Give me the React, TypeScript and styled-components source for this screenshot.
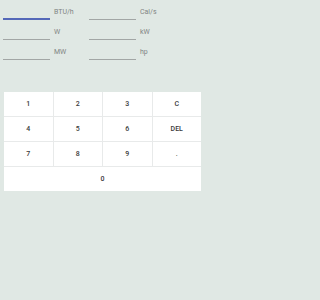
import React from "react";
import styled, { createGlobalStyle } from "styled-components";

const Global = createGlobalStyle`
  html, body { margin: 0; padding: 0; background: #e0e8e4; }
  body { font-family: Roboto, "Liberation Sans", sans-serif; }
`;

const Page = styled.div`
  width: 205px;
  height: 300px;
  background: #e0e8e4;
  box-sizing: border-box;
  padding-top: 5px;
`;

const Fields = styled.div`
  display: grid;
  grid-template-columns: 86px 1fr;
  row-gap: 5px;
  padding-left: 3px;
`;

const Field = styled.div`
  display: flex;
  align-items: flex-start;
  height: 15px;
`;

const Input = styled.div<{ $active?: boolean }>`
  width: 47px;
  height: 15px;
  box-sizing: border-box;
  border-bottom: ${(p) => (p.$active ? "2px solid #5468b8" : "1px solid #a2a6a5")};
`;

const Label = styled.span`
  margin-left: 4px;
  margin-top: 3px;
  font-size: 7px;
  line-height: 8px;
  color: #808483;
`;

const Keypad = styled.div`
  margin: 32px 4px 0 4px;
  display: grid;
  grid-template-columns: repeat(4, 1fr);
  grid-auto-rows: 24px;
  gap: 1px;
  background: #e8eaea;
`;

const Key = styled.button<{ $wide?: boolean }>`
  grid-column: ${(p) => (p.$wide ? "1 / -1" : "auto")};
  border: none;
  margin: 0;
  padding: 0;
  background: #ffffff;
  font-family: Roboto, "Liberation Sans", sans-serif;
  font-size: 7px;
  font-weight: 500;
  color: #3a3a3a;
  display: flex;
  align-items: center;
  justify-content: center;
`;

const fields: { unit: string; active?: boolean }[] = [
  { unit: "BTU/h", active: true },
  { unit: "Cal/s" },
  { unit: "W" },
  { unit: "kW" },
  { unit: "MW" },
  { unit: "hp" },
];

const keys = ["1", "2", "3", "C", "4", "5", "6", "DEL", "7", "8", "9", "."];

export default function App() {
  return (
    <Page>
      <Global />
      <Fields>
        {fields.map((f) => (
          <Field key={f.unit}>
            <Input $active={f.active} />
            <Label>{f.unit}</Label>
          </Field>
        ))}
      </Fields>
      <Keypad>
        {keys.map((k) => (
          <Key key={k}>{k}</Key>
        ))}
        <Key $wide>0</Key>
      </Keypad>
    </Page>
  );
}
